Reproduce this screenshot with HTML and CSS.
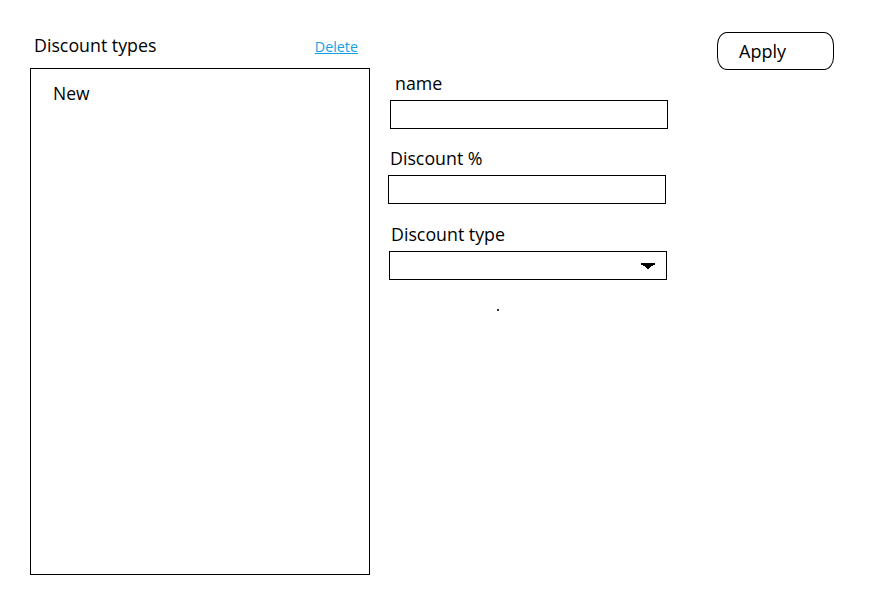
FILE: index.html
```html
<!DOCTYPE html>
<html>
<head>
<meta charset="utf-8">
<link rel="stylesheet" href="styles.css">
</head>
<body>
<div class="page">
  <div class="left">
    <div class="left-head">
      <span class="title">Discount types</span>
      <a class="delete" href="#">Delete</a>
    </div>
    <div class="list">
      <div class="item">New</div>
    </div>
  </div>
  <div class="form">
    <label class="lbl lbl-name">name</label>
    <div class="box box-name"></div>
    <label class="lbl lbl-pct">Discount %</label>
    <div class="box box-pct"></div>
    <label class="lbl lbl-type">Discount type</label>
    <div class="box box-type">
      <svg class="arrow" width="14" height="7" viewBox="0 0 14 7"><path d="M0 0H14V2H12V3H10V4H9V5H8V6H6V5H5V4H4V3H2V2H0Z" fill="#000"/></svg>
    </div>
    <div class="dot"></div>
  </div>
  <div class="actions">
    <button class="apply">Apply</button>
  </div>
</div>
</body>
</html>
```
FILE: styles.css
```css
* { box-sizing: border-box; }
html, body { margin: 0; padding: 0; background: #fff; }
body { font-family: "Open Sans", "Noto Sans", sans-serif; color: #000; }
.page { display: flex; align-items: flex-start; width: 871px; height: 598px; }
.left { margin-left: 30px; margin-top: 33px; width: 340px; }
.left-head { display: flex; justify-content: space-between; align-items: baseline; padding-left: 4px; padding-right: 12px; height: 35px; }
.title { font-size: 17.8px; }
.delete { font-size: 14.3px; color: #15a0e4; text-decoration: underline; margin-top: 1px; }
.list { border: 1px solid #000; height: 507px; padding: 14px 0 0 22px; }
.item { font-size: 17.5px; line-height: 21px; }
.form { margin-left: 18px; margin-top: 73px; width: 280px; display: flex; flex-direction: column; }
.lbl { font-size: 17.8px; line-height: 21px; display: block; }
.lbl-name { padding-left: 7px; }
.lbl-pct { margin-top: 19px; padding-left: 2px; }
.lbl-type { margin-top: 20px; padding-left: 3px; }
.box { border: 1px solid #000; height: 29px; width: 278px; margin-top: 6px; }
.box-name { margin-left: 2px; }
.box-type { margin-left: 1px; display: flex; align-items: center; justify-content: flex-end; padding-right: 11px; }
.arrow { display: block; margin-top: 2px; }
.dot { width: 2px; height: 2px; background: #333; margin-top: 29px; margin-left: 109px; }
.actions { margin-left: 49px; margin-top: 32px; }
.apply { width: 117px; height: 38px; border: 1px solid #000; border-radius: 10px / 13px; background: #fff; font-family: inherit; font-size: 18px; text-align: left; padding: 0 0 0 21px; color: #000; }
```
